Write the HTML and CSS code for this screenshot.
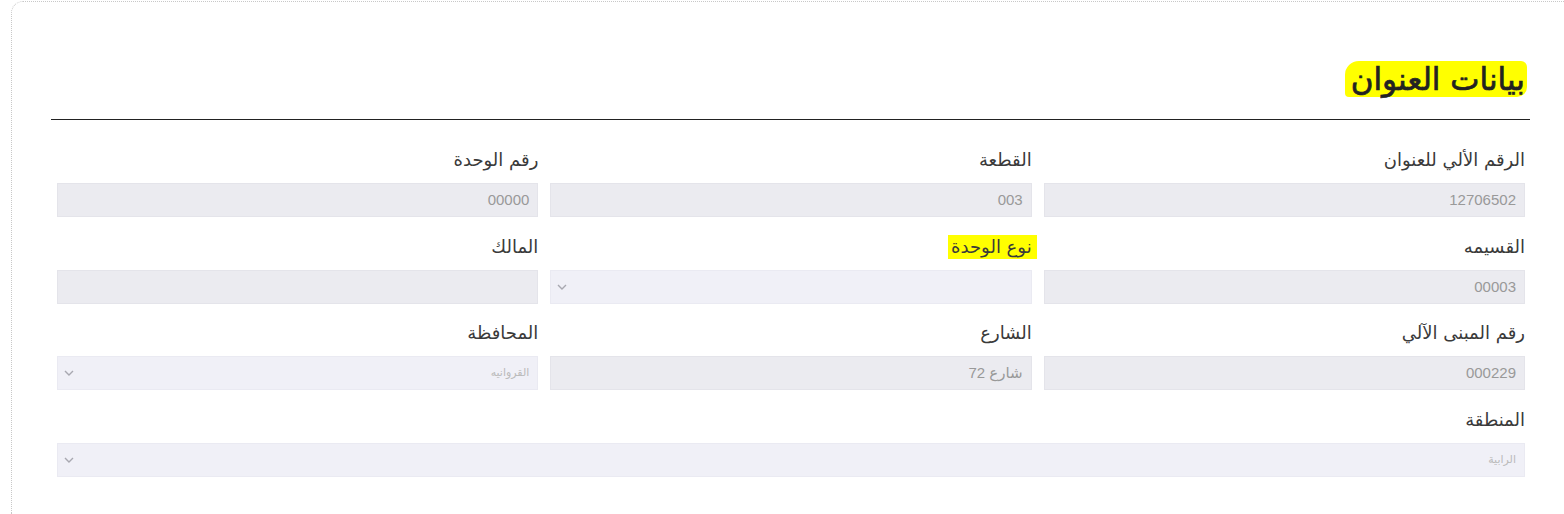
FILE: index.html
```html
<!DOCTYPE html>
<html lang="ar" dir="rtl">
<head>
    <meta charset="UTF-8">
    <title>بيانات العنوان</title>
    <link rel="stylesheet" href="styles.css">
</head>
<body>
    <div class="card">
        <h2 class="section-title"><span class="marker">بيانات العنوان</span></h2>
        <hr class="divider">

        <div class="form-grid">
            <div class="field">
                <label>الرقم الألي للعنوان</label>
                <div class="input">12706502</div>
            </div>
            <div class="field">
                <label>القطعة</label>
                <div class="input">003</div>
            </div>
            <div class="field">
                <label>رقم الوحدة</label>
                <div class="input">00000</div>
            </div>

            <div class="field">
                <label>القسيمه</label>
                <div class="input">00003</div>
            </div>
            <div class="field">
                <label><span class="label-mark">نوع الوحدة</span></label>
                <div class="input select">
                    <span class="value"></span>
                    <svg class="chevron" width="10" height="6" viewBox="0 0 10 6"><path d="M1 1l4 4 4-4" fill="none" stroke="#a8a8b0" stroke-width="1.4"/></svg>
                </div>
            </div>
            <div class="field">
                <label>المالك</label>
                <div class="input"></div>
            </div>

            <div class="field">
                <label>رقم المبنى الآلي</label>
                <div class="input">000229</div>
            </div>
            <div class="field">
                <label>الشارع</label>
                <div class="input">شارع 72</div>
            </div>
            <div class="field">
                <label>المحافظة</label>
                <div class="input select">
                    <span class="value small">القروانيه</span>
                    <svg class="chevron" width="10" height="6" viewBox="0 0 10 6"><path d="M1 1l4 4 4-4" fill="none" stroke="#a8a8b0" stroke-width="1.4"/></svg>
                </div>
            </div>

            <div class="field wide">
                <label>المنطقة</label>
                <div class="input select">
                    <span class="value small">الرابية</span>
                    <svg class="chevron" width="10" height="6" viewBox="0 0 10 6"><path d="M1 1l4 4 4-4" fill="none" stroke="#a8a8b0" stroke-width="1.4"/></svg>
                </div>
            </div>
        </div>
    </div>
</body>
</html>
```

FILE: styles.css
```css
:root {
    --text-main: #3a3a3a;
    --text-muted: #999;
    --field-bg: #ebebf0;
    --select-bg: #f0f0f7;
    --marker: #ffff00;
}

body {
    margin: 0;
    font-family: "DejaVu Sans", "Noto Sans", sans-serif;
    color: var(--text-main);
    background: #fff;
    overflow: hidden;
}

.card {
    box-sizing: border-box;
    height: 513px;
    margin: 1px 0 0 11px;
    padding: 55px 34px 0 39px;
    border-top: 1px dotted #c8c8c8;
    border-left: 1px dotted #c8c8c8;
    border-top-left-radius: 12px;
}

.section-title {
    margin: 0;
    padding-right: 3px;
    font-size: 31px;
    font-weight: normal;
    line-height: 45px;
    color: #222;
    -webkit-text-stroke: 0.7px #222;
}

.marker {
    background: var(--marker);
    padding: 0 2px 0 6px;
    border-radius: 14px 6px 10px 4px;
}

.divider {
    margin: 17px 0 0;
    border: none;
    border-top: 1px solid #222;
}

.form-grid {
    display: grid;
    grid-template-columns: repeat(3, 1fr);
    column-gap: 12px;
    row-gap: 17.7px;
    padding: 28px 5px 0 6px;
}

.field.wide {
    grid-column: 1 / -1;
}

.field label {
    display: block;
    font-size: 18px;
    line-height: 24px;
    margin-bottom: 11px;
    color: var(--text-main);
}

.label-mark {
    background: var(--marker);
    padding: 1px 5px 2px 3px;
    margin-right: -5px;
}

.input {
    height: 34px;
    box-sizing: border-box;
    background: var(--field-bg);
    border: 1px solid #e4e4ea;
    padding: 0 8px;
    font-family: "Liberation Sans", Arial, "DejaVu Sans", sans-serif;
    font-size: 15px;
    line-height: 32px;
    color: var(--text-muted);
}

.select {
    display: flex;
    align-items: center;
    justify-content: space-between;
    background: var(--select-bg);
    border-color: #eaeaf2;
}

.select .value.small {
    font-family: "DejaVu Sans", sans-serif;
    font-size: 11px;
    color: #bbb;
}

.chevron {
    margin-left: -2px;
}
```
